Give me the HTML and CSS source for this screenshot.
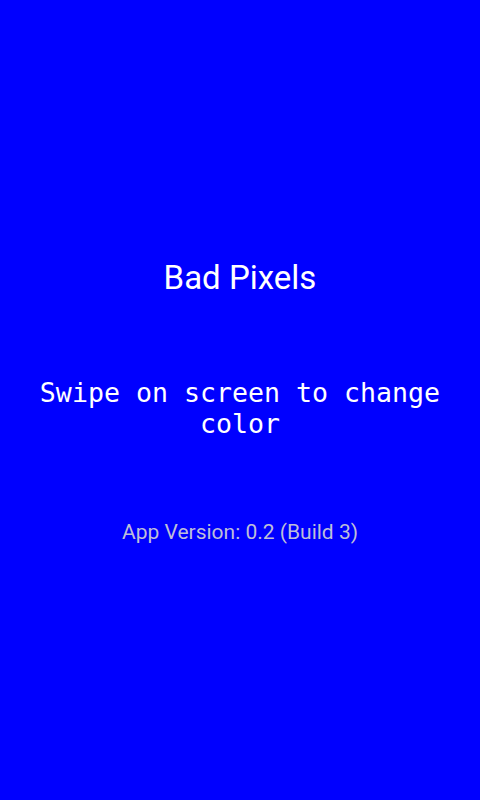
FILE: index.html
```html
<!DOCTYPE html>
<html>
<head>
<meta charset="utf-8">
<link rel="stylesheet" href="styles.css">
</head>
<body>
<main class="screen">
  <h1 class="title">Bad Pixels</h1>
  <p class="hint">Swipe on screen to change color</p>
  <p class="version">App Version: 0.2 (Build 3)</p>
</main>
</body>
</html>
```

FILE: styles.css
```css
html, body {
  margin: 0;
  padding: 0;
  width: 480px;
  height: 800px;
  background: #0000ff;
  overflow: hidden;
}
.screen {
  display: flex;
  flex-direction: column;
  align-items: center;
  text-align: center;
  height: 800px;
  box-sizing: border-box;
  padding-top: 259px;
}
.title {
  margin: 0;
  font-family: Roboto, sans-serif;
  font-weight: normal;
  font-size: 33px;
  line-height: 38px;
  color: #ffffff;
}
.hint {
  margin: 80px 0 0 0;
  padding: 0 30px;
  font-family: "DejaVu Sans Mono", monospace;
  font-size: 26.6px;
  line-height: 31px;
  color: #ffffff;
}
.version {
  margin: 80px 0 0 0;
  font-family: Roboto, sans-serif;
  font-size: 21px;
  line-height: 26px;
  color: #bebed8;
}
```
